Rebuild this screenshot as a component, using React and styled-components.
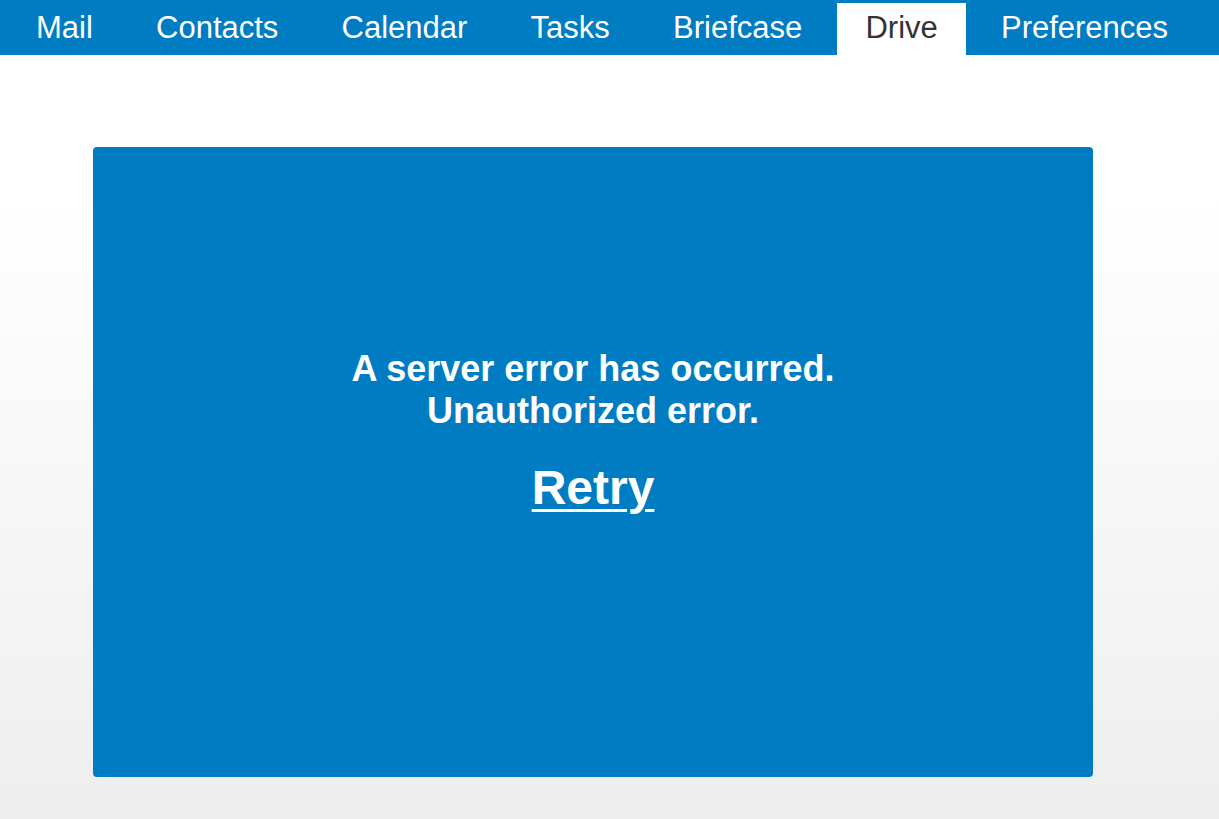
import styled, { createGlobalStyle } from "styled-components";

const GlobalStyle = createGlobalStyle`
  * {
    box-sizing: border-box;
    margin: 0;
    padding: 0;
  }

  html, body, #root {
    width: 100%;
    height: 100%;
  }

  body {
    font-family: "Liberation Sans", Arial, sans-serif;
    background: #fff;
    overflow: hidden;
  }
`;

const tabs = ["Mail", "Contacts", "Calendar", "Tasks", "Briefcase", "Drive", "Preferences"];

const App = () => {
  return (
    <Page>
      <GlobalStyle />
      <NavBar>
        {tabs.map((name) => (
          <Tab key={name} $active={name === "Drive"}>
            {name}
          </Tab>
        ))}
      </NavBar>

      <Main>
        <ErrorCard>
          <Message>
            A server error has occurred.
            <br />
            Unauthorized error.
          </Message>
          <RetryLink href="#">Retry</RetryLink>
        </ErrorCard>
      </Main>
    </Page>
  );
};

const Page = styled.div`
  display: flex;
  flex-direction: column;
  width: 100%;
  height: 100%;
`;

const NavBar = styled.nav`
  display: flex;
  align-items: flex-end;
  gap: 6.2px;
  height: 55px;
  padding: 3px 0 0 7.5px;
  background: #007cc2;
`;

const Tab = styled.div`
  height: 52px;
  padding: 1px 28.5px 3px;
  font-size: 31px;
  line-height: 48px;
  white-space: nowrap;
  color: ${(p) => (p.$active ? "#333" : "#fff")};
  background: ${(p) => (p.$active ? "#fff" : "transparent")};
  cursor: pointer;
`;

const Main = styled.main`
  flex: 1;
  padding: 92px 0 42px 93px;
  background: linear-gradient(180deg, #fff 0px, #fff 140px, #eeeeee 100%);
`;

const ErrorCard = styled.div`
  display: flex;
  flex-direction: column;
  align-items: center;
  justify-content: center;
  width: 1000px;
  height: 630px;
  padding-bottom: 62px;
  border-radius: 4px;
  background: #007cc2;
  color: #fff;
  text-align: center;
`;

const Message = styled.p`
  font-size: 36px;
  font-weight: bold;
  line-height: 42px;
`;

const RetryLink = styled.a`
  margin-top: 28px;
  font-size: 48px;
  font-weight: bold;
  color: #fff;
  text-decoration: underline;
  text-decoration-thickness: 3px;
  text-underline-offset: 5px;
`;

export default App;
